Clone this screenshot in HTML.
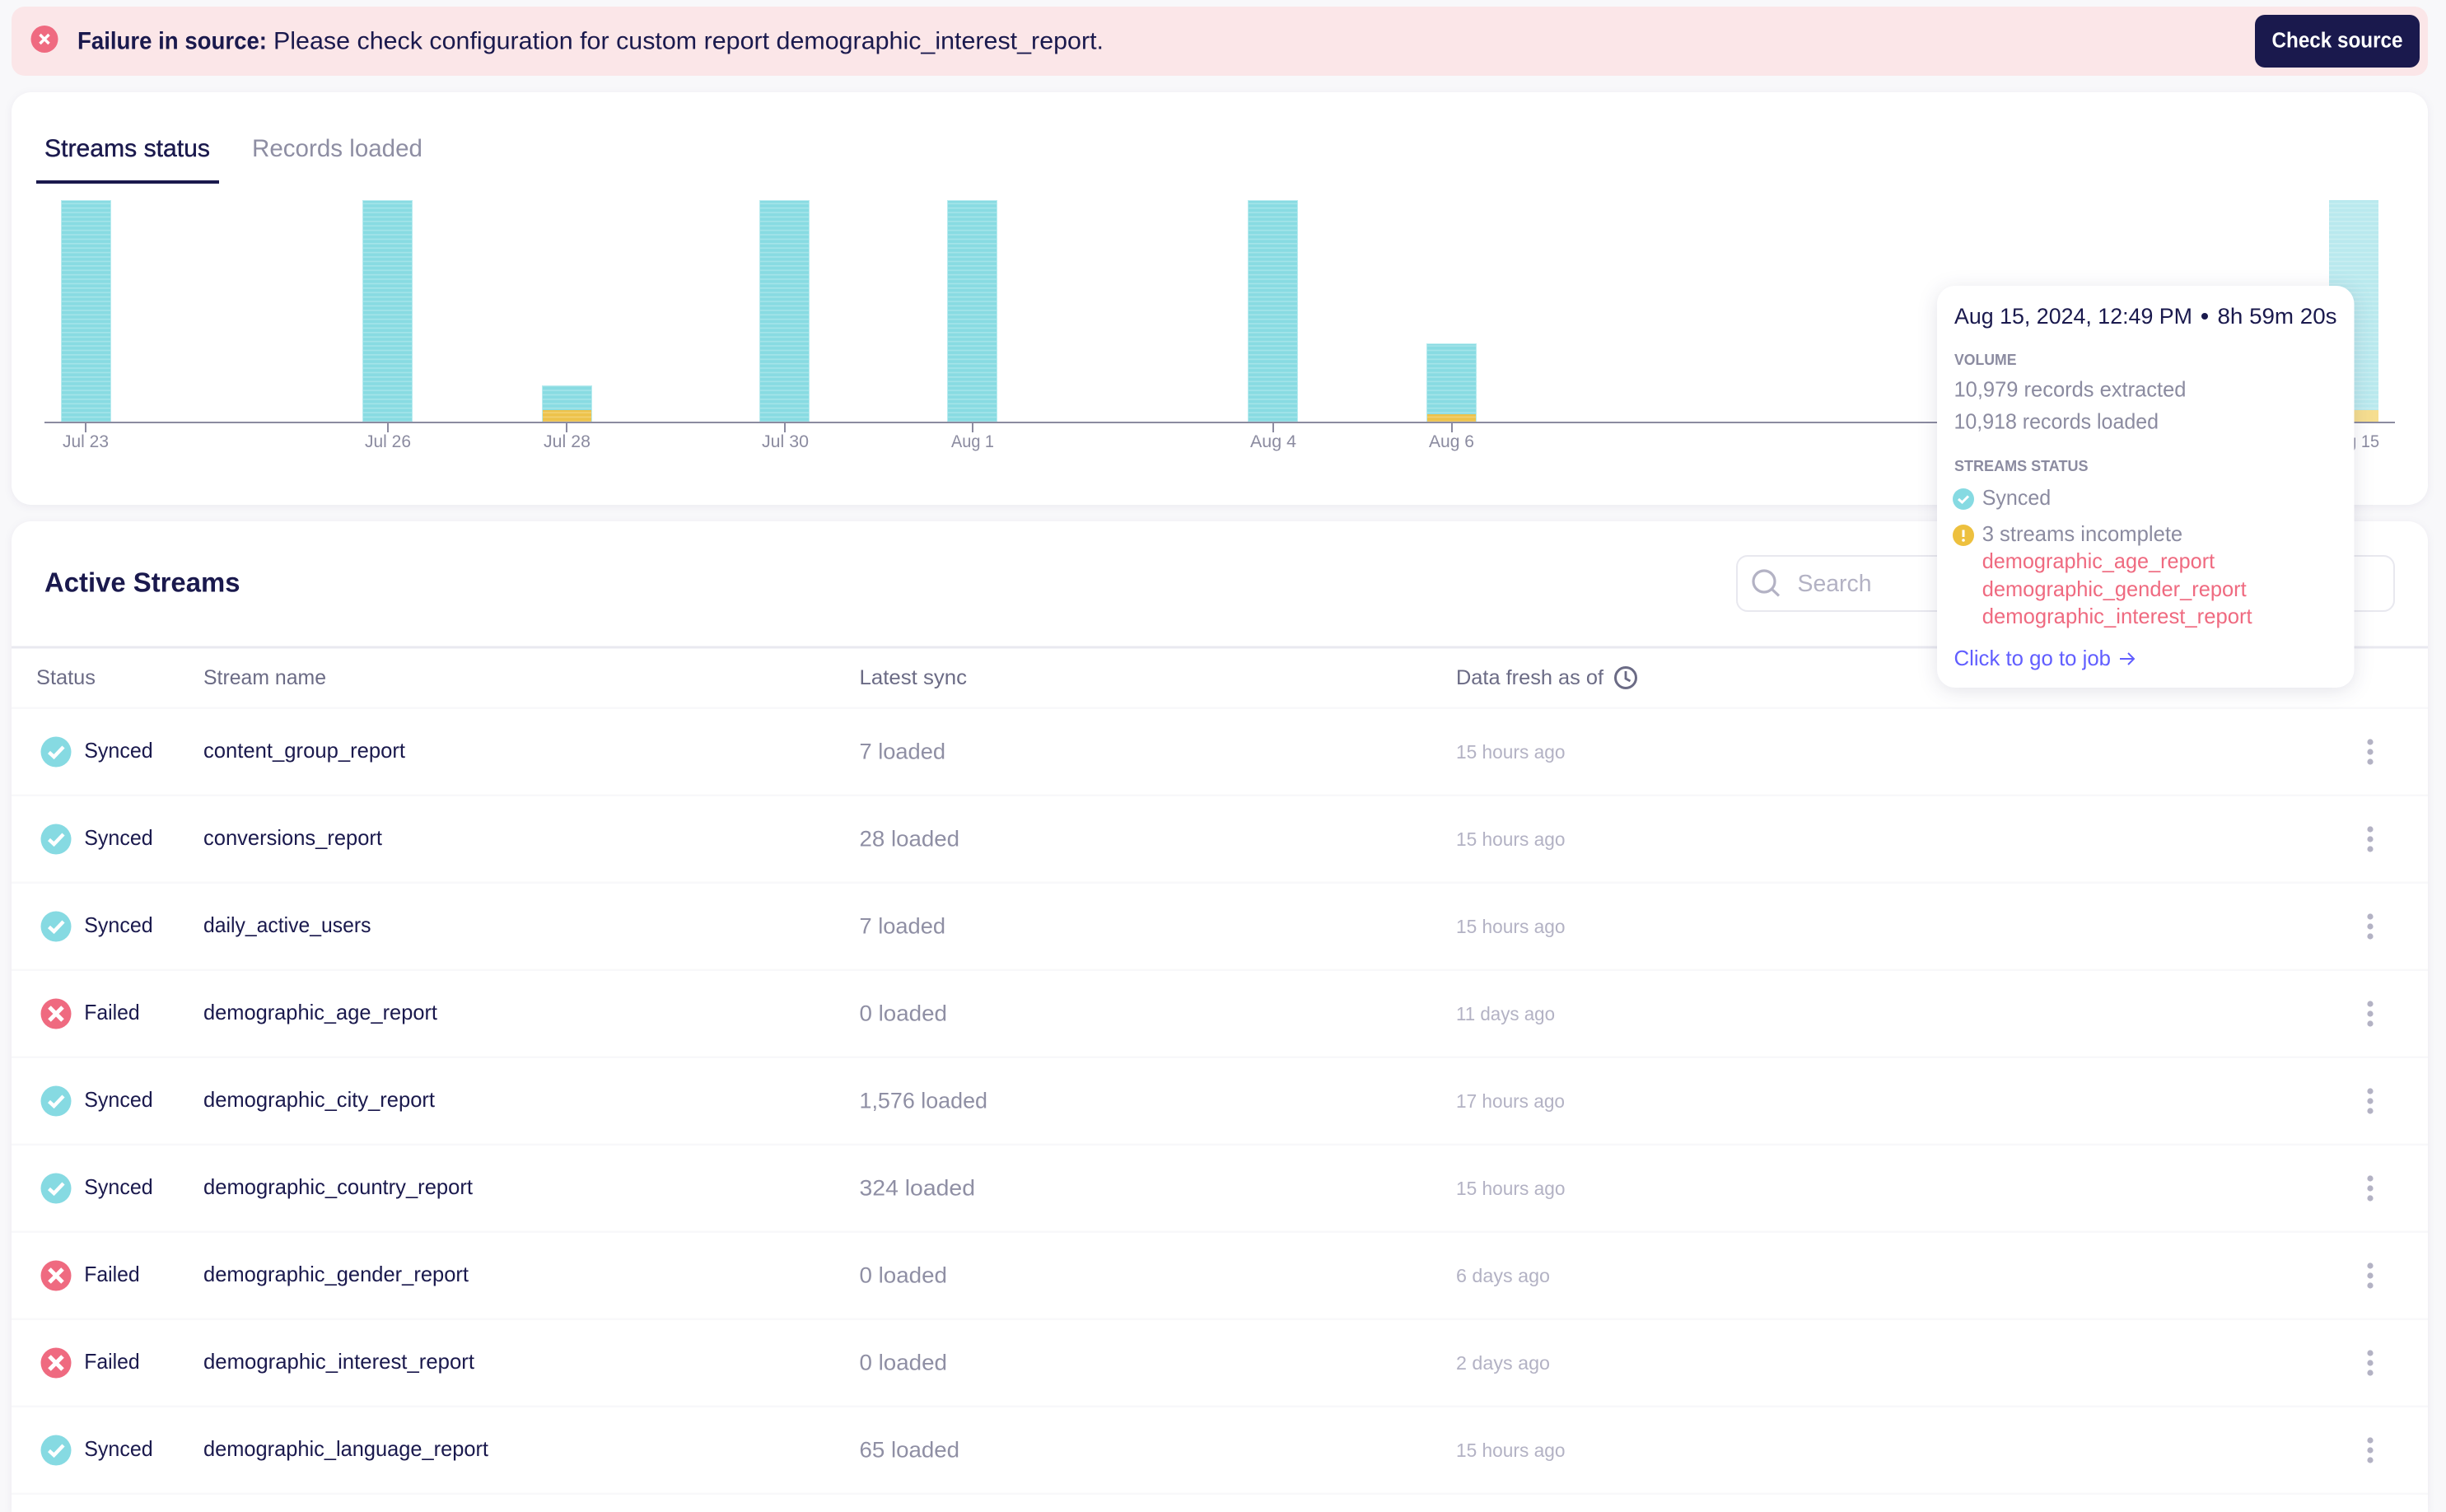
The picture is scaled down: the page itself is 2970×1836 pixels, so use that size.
<!DOCTYPE html>
<html lang="en">
<head>
<meta charset="utf-8">
<title>Streams</title>
<style>
html,body{margin:0;padding:0;background:#f8f8fa;width:2970px;height:1836px;overflow:hidden}
svg{display:block;position:absolute;left:0;top:0}
text{font-family:"Liberation Sans",sans-serif;white-space:pre}
.n{fill:#1a194d;font-size:26px}
.h{fill:#6b6b85;font-size:25px}
.l{fill:#8f8fa4;font-size:27px}
.f{fill:#b3b2c4;font-size:23.5px}
.a{fill:#8b8ba0;font-size:21px}
.t{fill:#8b8ba0;font-size:26px}
.s{fill:#8b8ba0;font-size:18.5px;font-weight:bold}
.r{fill:#ef6a80;font-size:26px}
</style>
</head>
<body>
<svg width="2970" height="1836" viewBox="0 0 2970 1836" xmlns="http://www.w3.org/2000/svg">
<defs>
<pattern id="st" width="10" height="5.4" patternUnits="userSpaceOnUse" y="243">
<rect width="10" height="5.4" fill="#88dbe2"/>
<rect width="10" height="1.7" y="3.4" fill="#a4e4e9"/>
</pattern>
<pattern id="st2" width="10" height="5.4" patternUnits="userSpaceOnUse" y="243">
<rect width="10" height="5.4" fill="#b9e9ee"/>
<rect width="10" height="1.7" y="3.4" fill="#c8eef1"/>
</pattern>
<pattern id="ye" width="10" height="5.4" patternUnits="userSpaceOnUse" y="243">
<rect width="10" height="5.4" fill="#edc24a"/>
<rect width="10" height="1.7" y="3.4" fill="#f2d070"/>
</pattern>
<g id="ok"><circle r="18.5" fill="#86dae2"/><path d="M-8.5 0.5L-2.5 6L9 -6" fill="none" stroke="#fff" stroke-width="4.4"/></g>
<g id="no"><circle r="18.5" fill="#ef6a80"/><path d="M-8 -8L8 8M8 -8L-8 8" fill="none" stroke="#fff" stroke-width="5"/></g>
<g id="dots"><circle cy="-12" r="3.6" fill="#b3b2c4"/><circle r="3.6" fill="#b3b2c4"/><circle cy="12" r="3.6" fill="#b3b2c4"/></g>
</defs>

<!-- banner -->
<rect x="14" y="8" width="2934" height="84" rx="16" fill="#fbe6e8"/>
<circle cx="54" cy="47.5" r="16.5" fill="#ef6a80"/>
<path d="M48.5 42L59.5 53M59.5 42L48.5 53" fill="none" stroke="#fff" stroke-width="3.4"/>
<text x="94" y="59.5" font-size="30" font-weight="bold" fill="#1a194d" textLength="230" lengthAdjust="spacingAndGlyphs">Failure in source:</text>
<text x="332" y="59.5" font-size="30" fill="#1a194d" textLength="1008" lengthAdjust="spacingAndGlyphs">Please check configuration for custom report demographic_interest_report.</text>
<rect x="2738" y="18" width="200" height="64" rx="12" fill="#1a194d"/>
<text x="2758.5" y="57.5" font-size="25.5" font-weight="bold" fill="#fff" textLength="159" lengthAdjust="spacingAndGlyphs">Check source</text>

<!-- chart card -->
<rect x="14" y="112" width="2934" height="501" rx="24" fill="#fff" style="filter:drop-shadow(0 2px 5px rgba(26,25,77,.06))"/>
<text x="54" y="190" font-size="30" fill="#1a194d" stroke="#1a194d" stroke-width=".4" textLength="201" lengthAdjust="spacingAndGlyphs">Streams status</text>
<text x="306" y="190" font-size="30" fill="#8e8ea3" textLength="207" lengthAdjust="spacingAndGlyphs">Records loaded</text>
<rect x="44" y="219" width="222" height="4" fill="#1a194d"/>

<g stroke="#b8ebef" stroke-width="1">
<rect x="74.5" y="243.5" width="60" height="269" fill="url(#st)"/>
<rect x="440.5" y="243.5" width="60" height="269" fill="url(#st)"/>
<rect x="658.5" y="468.5" width="60" height="44" fill="url(#st)"/>
<rect x="922.5" y="243.5" width="60" height="269" fill="url(#st)"/>
<rect x="1150.5" y="243.5" width="60" height="269" fill="url(#st)"/>
<rect x="1515.5" y="243.5" width="60" height="269" fill="url(#st)"/>
<rect x="1732.5" y="417.5" width="60" height="95" fill="url(#st)"/>
</g>
<rect x="659" y="498" width="59" height="14" fill="url(#ye)"/>
<rect x="1733" y="503" width="59" height="9" fill="url(#ye)"/>
<rect x="2828" y="243" width="60" height="255" fill="url(#st2)"/>
<rect x="2828" y="498" width="60" height="14" fill="#f6de90"/>

<rect x="54" y="512" width="2854" height="2" fill="#8b8ba0"/>
<g fill="#8b8ba0">
<rect x="103" y="514" width="2" height="11"/><rect x="470" y="514" width="2" height="11"/><rect x="687" y="514" width="2" height="11"/><rect x="952" y="514" width="2" height="11"/><rect x="1180" y="514" width="2" height="11"/><rect x="1545" y="514" width="2" height="11"/><rect x="1762" y="514" width="2" height="11"/>
</g>
<text class="a" x="76" y="543" textLength="56" lengthAdjust="spacingAndGlyphs">Jul 23</text>
<text class="a" x="443" y="543" textLength="56" lengthAdjust="spacingAndGlyphs">Jul 26</text>
<text class="a" x="660" y="543" textLength="57" lengthAdjust="spacingAndGlyphs">Jul 28</text>
<text class="a" x="925" y="543" textLength="57" lengthAdjust="spacingAndGlyphs">Jul 30</text>
<text class="a" x="1155" y="543" textLength="52" lengthAdjust="spacingAndGlyphs">Aug 1</text>
<text class="a" x="1518" y="543" textLength="56" lengthAdjust="spacingAndGlyphs">Aug 4</text>
<text class="a" x="1735" y="543" textLength="55" lengthAdjust="spacingAndGlyphs">Aug 6</text>
<text class="a" x="2826" y="543" textLength="63" lengthAdjust="spacingAndGlyphs">Aug 15</text>

<!-- table card -->
<path d="M14 1836V657a24 24 0 0 1 24-24H2924a24 24 0 0 1 24 24V1836Z" fill="#fff" style="filter:drop-shadow(0 2px 5px rgba(26,25,77,.06))"/>
<text x="54" y="718.5" font-size="33.5" font-weight="bold" fill="#1a194d" textLength="237.5" lengthAdjust="spacingAndGlyphs">Active Streams</text>
<rect x="2109" y="675" width="798" height="67" rx="13" fill="#fff" stroke="#e8e8ef" stroke-width="2"/>
<circle cx="2142" cy="706" r="13" fill="none" stroke="#b3b2c4" stroke-width="3.2"/>
<path d="M2151.5 715.5L2160 723.5" fill="none" stroke="#b3b2c4" stroke-width="3.2"/>
<text x="2182.5" y="718" font-size="28.5" fill="#b3b2c4" textLength="90" lengthAdjust="spacingAndGlyphs">Search</text>

<rect x="14" y="784.5" width="2934" height="3" fill="#e9e9f0"/>
<text class="h" x="44" y="831" textLength="72" lengthAdjust="spacingAndGlyphs">Status</text>
<text class="h" x="247" y="831" textLength="149" lengthAdjust="spacingAndGlyphs">Stream name</text>
<text class="h" x="1043.5" y="831" textLength="130.5" lengthAdjust="spacingAndGlyphs">Latest sync</text>
<text class="h" x="1768" y="831" textLength="179" lengthAdjust="spacingAndGlyphs">Data fresh as of</text>
<circle cx="1974" cy="823" r="12.5" fill="none" stroke="#6b6b85" stroke-width="3"/>
<path d="M1974 815V824L1979.5 827" fill="none" stroke="#6b6b85" stroke-width="2.8"/>

<g fill="#f8f8fa">
<rect x="14" y="858.5" width="2934" height="2.5"/><rect x="14" y="964.5" width="2934" height="2.5"/><rect x="14" y="1070.5" width="2934" height="2.5"/><rect x="14" y="1176.5" width="2934" height="2.5"/><rect x="14" y="1282.5" width="2934" height="2.5"/><rect x="14" y="1388.5" width="2934" height="2.5"/><rect x="14" y="1494.5" width="2934" height="2.5"/><rect x="14" y="1600.5" width="2934" height="2.5"/><rect x="14" y="1706.5" width="2934" height="2.5"/><rect x="14" y="1812.5" width="2934" height="2.5"/>
</g>

<!-- rows -->
<use href="#ok" x="68" y="913"/><text class="n" x="102.2" y="920" textLength="83.5" lengthAdjust="spacingAndGlyphs">Synced</text>
<text class="n" x="247" y="920" textLength="245" lengthAdjust="spacingAndGlyphs">content_group_report</text>
<text class="l" x="1043.5" y="921.5" textLength="104.5" lengthAdjust="spacingAndGlyphs">7 loaded</text>
<text class="f" x="1768" y="921" textLength="132.5" lengthAdjust="spacingAndGlyphs">15 hours ago</text>
<use href="#dots" x="2878" y="913"/>

<use href="#ok" x="68" y="1019"/><text class="n" x="102.2" y="1026" textLength="83.5" lengthAdjust="spacingAndGlyphs">Synced</text>
<text class="n" x="247" y="1026" textLength="217" lengthAdjust="spacingAndGlyphs">conversions_report</text>
<text class="l" x="1043.5" y="1027.5" textLength="121.5" lengthAdjust="spacingAndGlyphs">28 loaded</text>
<text class="f" x="1768" y="1027" textLength="132.5" lengthAdjust="spacingAndGlyphs">15 hours ago</text>
<use href="#dots" x="2878" y="1019"/>

<use href="#ok" x="68" y="1125"/><text class="n" x="102.2" y="1132" textLength="83.5" lengthAdjust="spacingAndGlyphs">Synced</text>
<text class="n" x="247" y="1132" textLength="203.5" lengthAdjust="spacingAndGlyphs">daily_active_users</text>
<text class="l" x="1043.5" y="1133.5" textLength="104.5" lengthAdjust="spacingAndGlyphs">7 loaded</text>
<text class="f" x="1768" y="1133" textLength="132.5" lengthAdjust="spacingAndGlyphs">15 hours ago</text>
<use href="#dots" x="2878" y="1125"/>

<use href="#no" x="68" y="1231"/><text class="n" x="102.2" y="1238" textLength="67.5" lengthAdjust="spacingAndGlyphs">Failed</text>
<text class="n" x="247" y="1238" textLength="284" lengthAdjust="spacingAndGlyphs">demographic_age_report</text>
<text class="l" x="1043.5" y="1239.5" textLength="106.5" lengthAdjust="spacingAndGlyphs">0 loaded</text>
<text class="f" x="1768" y="1239" textLength="120" lengthAdjust="spacingAndGlyphs">11 days ago</text>
<use href="#dots" x="2878" y="1231"/>

<use href="#ok" x="68" y="1337"/><text class="n" x="102.2" y="1344" textLength="83.5" lengthAdjust="spacingAndGlyphs">Synced</text>
<text class="n" x="247" y="1344" textLength="281" lengthAdjust="spacingAndGlyphs">demographic_city_report</text>
<text class="l" x="1043.5" y="1345.5" textLength="155.5" lengthAdjust="spacingAndGlyphs">1,576 loaded</text>
<text class="f" x="1768" y="1345" textLength="132" lengthAdjust="spacingAndGlyphs">17 hours ago</text>
<use href="#dots" x="2878" y="1337"/>

<use href="#ok" x="68" y="1443"/><text class="n" x="102.2" y="1450" textLength="83.5" lengthAdjust="spacingAndGlyphs">Synced</text>
<text class="n" x="247" y="1450" textLength="327" lengthAdjust="spacingAndGlyphs">demographic_country_report</text>
<text class="l" x="1043.5" y="1451.5" textLength="140.5" lengthAdjust="spacingAndGlyphs">324 loaded</text>
<text class="f" x="1768" y="1451" textLength="132.5" lengthAdjust="spacingAndGlyphs">15 hours ago</text>
<use href="#dots" x="2878" y="1443"/>

<use href="#no" x="68" y="1549"/><text class="n" x="102.2" y="1556" textLength="67.5" lengthAdjust="spacingAndGlyphs">Failed</text>
<text class="n" x="247" y="1556" textLength="322" lengthAdjust="spacingAndGlyphs">demographic_gender_report</text>
<text class="l" x="1043.5" y="1557.5" textLength="106.5" lengthAdjust="spacingAndGlyphs">0 loaded</text>
<text class="f" x="1768" y="1557" textLength="114" lengthAdjust="spacingAndGlyphs">6 days ago</text>
<use href="#dots" x="2878" y="1549"/>

<use href="#no" x="68" y="1655"/><text class="n" x="102.2" y="1662" textLength="67.5" lengthAdjust="spacingAndGlyphs">Failed</text>
<text class="n" x="247" y="1662" textLength="329" lengthAdjust="spacingAndGlyphs">demographic_interest_report</text>
<text class="l" x="1043.5" y="1663.5" textLength="106.5" lengthAdjust="spacingAndGlyphs">0 loaded</text>
<text class="f" x="1768" y="1663" textLength="114" lengthAdjust="spacingAndGlyphs">2 days ago</text>
<use href="#dots" x="2878" y="1655"/>

<use href="#ok" x="68" y="1761"/><text class="n" x="102.2" y="1768" textLength="83.5" lengthAdjust="spacingAndGlyphs">Synced</text>
<text class="n" x="247" y="1768" textLength="346" lengthAdjust="spacingAndGlyphs">demographic_language_report</text>
<text class="l" x="1043.5" y="1769.5" textLength="121.5" lengthAdjust="spacingAndGlyphs">65 loaded</text>
<text class="f" x="1768" y="1769" textLength="132.5" lengthAdjust="spacingAndGlyphs">15 hours ago</text>
<use href="#dots" x="2878" y="1761"/>

<!-- tooltip -->
<rect x="2352" y="347" width="506.5" height="488" rx="22" fill="#fff" style="filter:drop-shadow(0 4px 12px rgba(26,25,77,.12))"/>
<text x="2373" y="393" font-size="27" fill="#1a194d" textLength="289" lengthAdjust="spacingAndGlyphs">Aug 15, 2024, 12:49 PM</text>
<circle cx="2677" cy="384" r="4" fill="#1a194d"/>
<text x="2692.5" y="393" font-size="27" fill="#1a194d" textLength="145" lengthAdjust="spacingAndGlyphs">8h 59m 20s</text>
<text class="s" x="2373" y="443" textLength="75.5" lengthAdjust="spacingAndGlyphs">VOLUME</text>
<text class="t" x="2372.5" y="481.5" textLength="282" lengthAdjust="spacingAndGlyphs">10,979 records extracted</text>
<text class="t" x="2372.5" y="520.5" textLength="248.5" lengthAdjust="spacingAndGlyphs">10,918 records loaded</text>
<text class="s" x="2373" y="572" textLength="162.5" lengthAdjust="spacingAndGlyphs">STREAMS STATUS</text>
<circle cx="2384" cy="606" r="13" fill="#86dae2"/>
<path d="M2378 606L2382.5 610L2390 602.5" fill="none" stroke="#fff" stroke-width="3"/>
<text class="t" x="2406.7" y="613" textLength="83.5" lengthAdjust="spacingAndGlyphs">Synced</text>
<circle cx="2384" cy="650" r="13" fill="#edc03e"/>
<path d="M2384 643.5V652" fill="none" stroke="#fff" stroke-width="3"/>
<circle cx="2384" cy="656" r="1.8" fill="#fff"/>
<text class="t" x="2406.7" y="657" textLength="243.5" lengthAdjust="spacingAndGlyphs">3 streams incomplete</text>
<text class="r" x="2406.7" y="690" textLength="282.5" lengthAdjust="spacingAndGlyphs">demographic_age_report</text>
<text class="r" x="2406.7" y="724" textLength="321" lengthAdjust="spacingAndGlyphs">demographic_gender_report</text>
<text class="r" x="2406.7" y="757" textLength="328" lengthAdjust="spacingAndGlyphs">demographic_interest_report</text>
<text x="2372.5" y="808" font-size="26" fill="#615eff" textLength="190.5" lengthAdjust="spacingAndGlyphs">Click to go to job</text>
<path d="M2574 800H2591M2584 793L2591 800L2584 807" fill="none" stroke="#615eff" stroke-width="2"/>
</svg>
</body>
</html>
